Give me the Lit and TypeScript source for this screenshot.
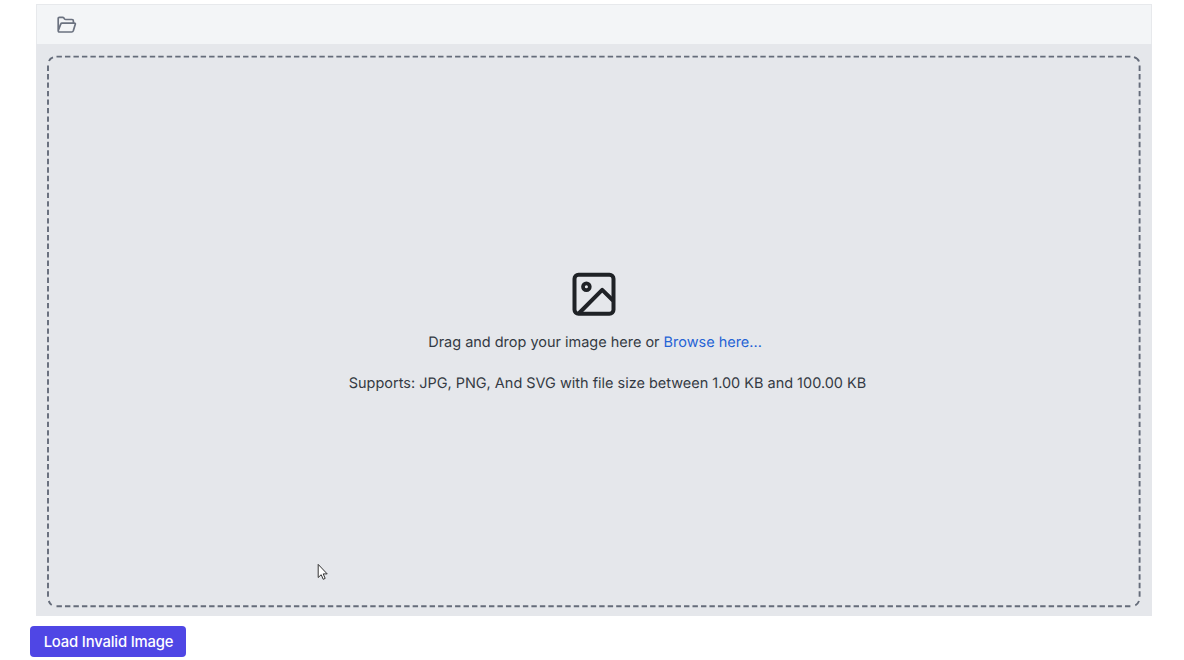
import { LitElement, html, css } from "lit";
import { customElement } from "lit/decorators.js";

@customElement("app-root")
export class AppRoot extends LitElement {
  static styles = css`
    :host {
      display: block;
      position: relative;
      box-sizing: border-box;
      height: 660px;
      padding: 4px 32px 0 36px;
      overflow: hidden;
      background: #fff;
      color: #343a43;
      font-family: Inter, "Liberation Sans", sans-serif;
      font-size: 14.47px;
      text-rendering: geometricPrecision;
    }
    svg { display: block; }
    .editor {
      box-sizing: border-box;
      height: 612px;
      display: flex;
      flex-direction: column;
      background: #e5e7eb;
    }
    .toolbar {
      box-sizing: border-box;
      height: 40px;
      padding: 1px 0 0 20px;
      display: flex;
      align-items: center;
      background: #f3f5f7;
      border: 1px solid #e7e9ec;
      border-bottom: 0;
    }
    .drop {
      flex: 1;
      min-height: 0;
      margin: 11px 11px 8px;
      display: grid;
    }
    .outline {
      grid-area: 1 / 1;
      width: 1094px;
      height: 553px;
    }
    .content {
      grid-area: 1 / 1;
      display: flex;
      flex-direction: column;
      align-items: center;
      padding-top: 217px;
    }
    .line {
      margin-top: 15px;
      height: 24px;
      line-height: 24px;
      white-space: nowrap;
      padding-left: 2px;
    }
    .formats {
      margin-top: 17px;
      padding-left: 27px;
    }
    .browse { color: #2563d5; text-decoration: none; }
    .load {
      display: block;
      box-sizing: border-box;
      width: 156px;
      height: 31px;
      margin: 10px 0 0 -6px;
      padding: 1px 0 0 1px;
      border: 0;
      border-radius: 4px;
      background: #4f46e5;
      color: #fff;
      font: 500 14.8px/30px Inter, "Liberation Sans", sans-serif;
      letter-spacing: -0.15px;
      text-align: center;
      white-space: nowrap;
    }
    .pointer {
      position: absolute;
      left: 317px;
      top: 563px;
    }
  `;

  render() {
    return html`
      <div class="editor">
        <div class="toolbar">
          <svg width="20" height="18" viewBox="0 0 20 18" fill="none" stroke="#6b7280" stroke-width="1.7" stroke-linejoin="round">
            <path d="M1.2 15V2.5Q1.2 1.3 2.4 1.3H5.6Q6.4 1.3 6.9 2L7.6 3Q8 3.5 8.7 3.5H15Q16.4 3.5 16.4 4.9V7.2M1.2 14.6L3.7 8.1Q4.1 7.2 5 7.2H17.4Q18.7 7.2 18.3 8.3L16.3 14.8Q15.9 16 14.7 16H2.4Q1.2 16 1.2 14.6Z" />
          </svg>
        </div>
        <div class="drop">
          <svg class="outline" viewBox="0 0 1094 553" fill="none" stroke="#656c7a" stroke-width="1.9">
            <path d="M9.5 1.6H1084.5" stroke-dasharray="5.4 3.08" />
            <path d="M9.5 551.3H1084.5" stroke-dasharray="5.4 3.08" />
            <path d="M1 10.5V542.5" stroke-dasharray="5.4 3.08" />
            <path d="M1092.6 10.5V542.5" stroke-dasharray="5.4 3.08" />
            <path d="M2 6Q3 3.4 6 2.4M1087 2.2Q1091 3.4 1092 6.5M1.7 546Q3 549 4.7 550M1092 546Q1090.8 549.2 1088.3 550.4" />
          </svg>
          <div class="content">
            <svg width="44" height="44" viewBox="0 0 44 44" fill="none" stroke="#1f2226" stroke-width="4">
              <rect x="2.5" y="2.7" width="39" height="39" rx="4" />
              <circle cx="14.4" cy="14.8" r="3.4" stroke-width="3.7" />
              <path d="M7.2 41L30.2 17.8L41 28.5" stroke-linejoin="round" />
            </svg>
            <div class="line">Drag and drop your image here or <a class="browse">Browse here...</a></div>
            <div class="line formats">Supports: JPG, PNG, And SVG with file size between 1.00 KB and 100.00 KB</div>
          </div>
        </div>
      </div>
      <button class="load">Load Invalid Image</button>
      <svg class="pointer" width="12" height="19" viewBox="0 0 12 19">
        <path d="M1.2 1.4V14.5L4.2 11.7L6.2 16.3L8.2 15.4L6.2 10.9H10.2Z" fill="#fff" stroke="#333" stroke-width="1" />
      </svg>
    `;
  }
}
